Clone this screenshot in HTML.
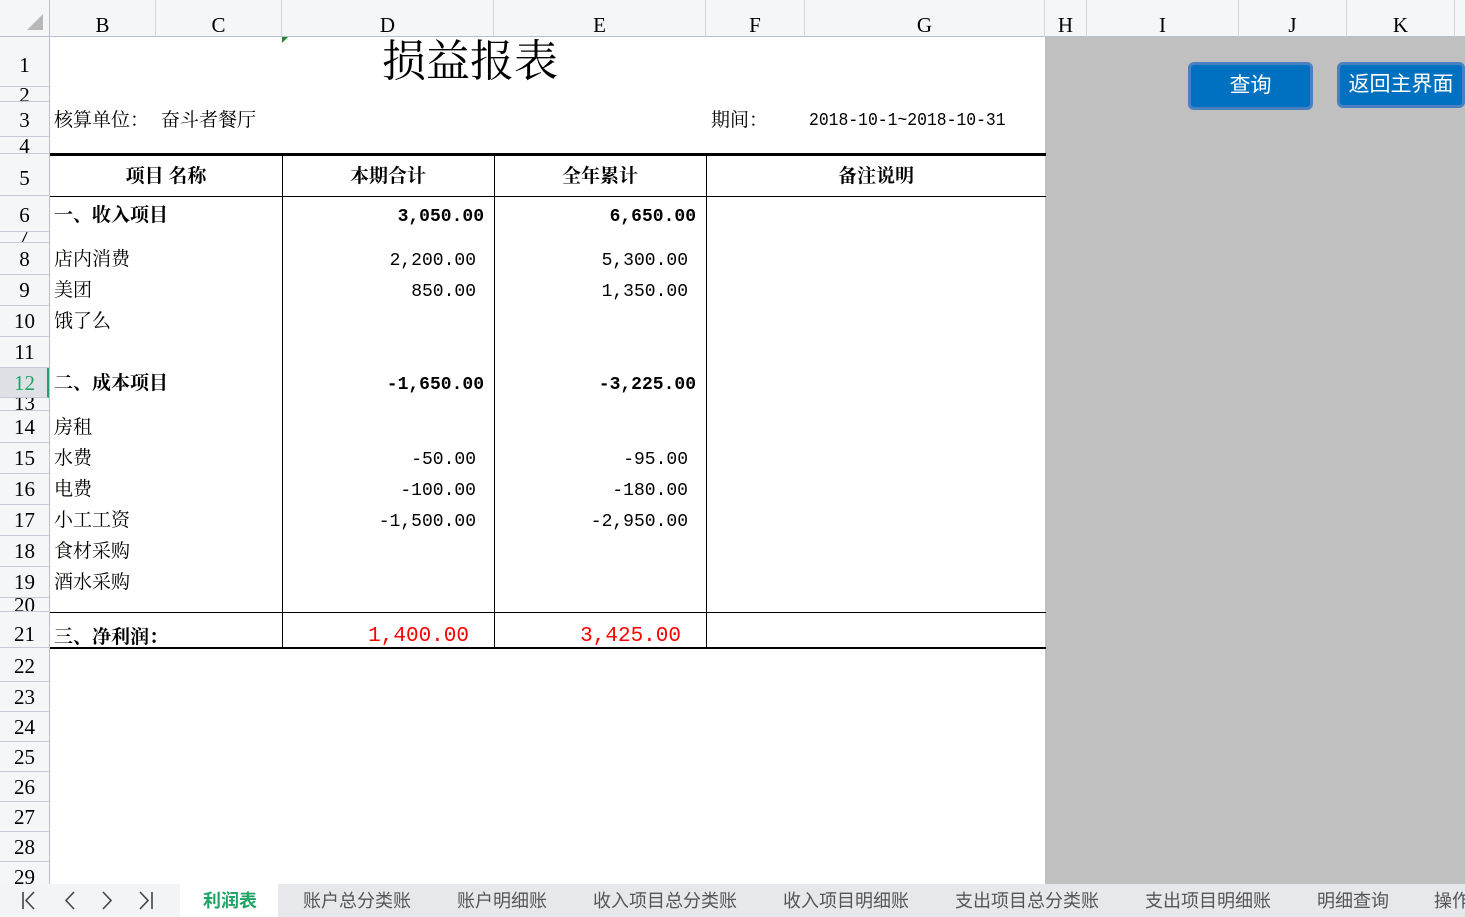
<!DOCTYPE html>
<html><head><meta charset="utf-8"><style>
*{margin:0;padding:0;box-sizing:border-box}
html,body{width:1465px;height:917px;overflow:hidden}
body{position:relative;background:#fff;font-family:"Liberation Serif","Noto Serif CJK SC",serif;color:#000}
.a{position:absolute}
.hdr{background:#f5f6f8}
.rh{position:absolute;left:0;width:49px;overflow:hidden;border-bottom:1px solid #c5cad6;background:#f5f6f8}
.rh span{position:absolute;left:0;width:49px;text-align:center;font-size:21px;line-height:22px}
.ch{position:absolute;top:0;height:37px;border-right:1px solid #d0d4dc;text-align:center;font-size:21px;line-height:50px;}
.t{position:absolute;font-size:19px;line-height:22px;white-space:nowrap;font-family:"Liberation Serif","Noto Serif CJK SC",serif}
.b{font-weight:bold}
.n{text-align:right;font-family:"Liberation Mono","Noto Serif CJK SC",monospace;font-size:18px}
.tab{position:absolute;top:884px;height:33px;font-size:18px;line-height:34px;color:#555;white-space:nowrap;font-family:"Liberation Sans","Noto Sans CJK SC",sans-serif}
</style></head><body>
<div class="a hdr" style="left:0;top:0;width:1465px;height:37px;border-bottom:1px solid #b9bfcc"></div>
<div class="a" style="left:27px;top:14px;width:0;height:0;border-left:16px solid transparent;border-bottom:16px solid #b8b8b8"></div>
<div class="a" style="left:49px;top:0;width:1px;height:884px;background:#b9bfcc"></div>
<div class="ch" style="left:50px;width:106px">B</div>
<div class="ch" style="left:156px;width:126px">C</div>
<div class="ch" style="left:282px;width:212px">D</div>
<div class="ch" style="left:494px;width:212px">E</div>
<div class="ch" style="left:706px;width:99px">F</div>
<div class="ch" style="left:805px;width:240px">G</div>
<div class="ch" style="left:1045px;width:42px">H</div>
<div class="ch" style="left:1087px;width:152px">I</div>
<div class="ch" style="left:1239px;width:108px">J</div>
<div class="ch" style="left:1347px;width:108px">K</div>
<div class="a" style="left:282px;top:37px;width:0;height:0;border-top:6px solid #1a8a2a;border-right:6px solid transparent"></div>

<div class="rh" style="top:37px;height:50px"><span style="top:17px">1</span></div>
<div class="rh" style="top:87px;height:15px"><span style="top:-3px">2</span></div>
<div class="rh" style="top:102px;height:35px"><span style="top:7px">3</span></div>
<div class="rh" style="top:137px;height:17px"><span style="top:-2px">4</span></div>
<div class="rh" style="top:154px;height:42px"><span style="top:13px">5</span></div>
<div class="rh" style="top:196px;height:36px"><span style="top:8px">6</span></div>
<div class="rh" style="top:232px;height:11px"><span style="top:-8px">7</span></div>
<div class="rh" style="top:243px;height:32px"><span style="top:5px">8</span></div>
<div class="rh" style="top:275px;height:31px"><span style="top:4px">9</span></div>
<div class="rh" style="top:306px;height:31px"><span style="top:4px">10</span></div>
<div class="rh" style="top:337px;height:31px"><span style="top:4px">11</span></div>
<div class="rh" style="top:368px;height:30px;background:#dfe1e6;border-right:2px solid #21a366"><span style="top:4px;color:#21a366">12</span></div>
<div class="rh" style="top:398px;height:13px"><span style="top:-6px">13</span></div>
<div class="rh" style="top:411px;height:32px"><span style="top:5px">14</span></div>
<div class="rh" style="top:443px;height:31px"><span style="top:4px">15</span></div>
<div class="rh" style="top:474px;height:31px"><span style="top:4px">16</span></div>
<div class="rh" style="top:505px;height:31px"><span style="top:4px">17</span></div>
<div class="rh" style="top:536px;height:31px"><span style="top:4px">18</span></div>
<div class="rh" style="top:567px;height:31px"><span style="top:4px">19</span></div>
<div class="rh" style="top:598px;height:14px"><span style="top:-4px">20</span></div>
<div class="rh" style="top:612px;height:36px"><span style="top:11px">21</span></div>
<div class="rh" style="top:648px;height:34px"><span style="top:7px">22</span></div>
<div class="rh" style="top:682px;height:30px"><span style="top:4px">23</span></div>
<div class="rh" style="top:712px;height:30px"><span style="top:4px">24</span></div>
<div class="rh" style="top:742px;height:30px"><span style="top:4px">25</span></div>
<div class="rh" style="top:772px;height:30px"><span style="top:4px">26</span></div>
<div class="rh" style="top:802px;height:30px"><span style="top:4px">27</span></div>
<div class="rh" style="top:832px;height:30px"><span style="top:4px">28</span></div>
<div class="rh" style="top:862px;height:22px;border-bottom:none"><span style="top:4px">29</span></div>

<div class="a" style="left:1045px;top:37px;width:420px;height:847px;background:#c0c0c0"></div>
<div class="a" style="left:1188px;top:62px;width:125px;height:48px;background:#0070c0;border:3px solid #4a7fc0;border-radius:6px;color:#fff;font-size:21px;text-align:center;line-height:42px;font-family:'Liberation Sans','Noto Sans CJK SC',sans-serif">查询</div>
<div class="a" style="left:1337px;top:62px;width:128px;height:46px;background:#0070c0;border:3px solid #4a7fc0;border-radius:6px;color:#fff;font-size:21px;text-align:center;line-height:40px;font-family:'Liberation Sans','Noto Sans CJK SC',sans-serif;white-space:nowrap">返回主界面</div>

<div class="t" style="left:382px;top:36px;font-size:44px;line-height:52px">损益报表</div>
<div class="t" style="left:54px;top:110px">核算单位：</div>
<div class="t" style="left:161px;top:110px">奋斗者餐厅</div>
<div class="t" style="left:711px;top:110px">期间：</div>
<div class="t" style="left:809px;top:110px;font-family:'Liberation Mono',monospace;font-size:18px;transform:scaleX(0.91);transform-origin:left">2018-10-1~2018-10-31</div>

<div class="a" style="left:50px;top:153px;width:996px;height:3px;background:#000"></div>
<div class="a" style="left:50px;top:196px;width:996px;height:1px;background:#000"></div>
<div class="a" style="left:50px;top:612px;width:996px;height:1px;background:#000"></div>
<div class="a" style="left:50px;top:647px;width:996px;height:2px;background:#000"></div>
<div class="a" style="left:282px;top:154px;width:1px;height:494px;background:#000"></div>
<div class="a" style="left:494px;top:154px;width:1px;height:494px;background:#000"></div>
<div class="a" style="left:706px;top:154px;width:1px;height:494px;background:#000"></div>

<div class="t b" style="left:50px;width:232px;text-align:center;top:166px">项目 名称</div>
<div class="t b" style="left:282px;width:212px;text-align:center;top:166px">本期合计</div>
<div class="t b" style="left:494px;width:212px;text-align:center;top:166px">全年累计</div>
<div class="t b" style="left:706px;width:340px;text-align:center;top:166px">备注说明</div>

<div class="t b" style="left:54px;top:205px">一、收入项目</div>
<div class="t b n" style="left:282px;width:202px;top:206px">3,050.00</div>
<div class="t b n" style="left:494px;width:202px;top:206px">6,650.00</div>
<div class="t" style="left:54px;top:249px">店内消费</div>
<div class="t n" style="left:282px;width:194px;top:250px">2,200.00</div>
<div class="t n" style="left:494px;width:194px;top:250px">5,300.00</div>
<div class="t" style="left:54px;top:280px">美团</div>
<div class="t n" style="left:282px;width:194px;top:281px">850.00</div>
<div class="t n" style="left:494px;width:194px;top:281px">1,350.00</div>
<div class="t" style="left:54px;top:311px">饿了么</div>
<div class="t b" style="left:54px;top:373px">二、成本项目</div>
<div class="t b n" style="left:282px;width:202px;top:374px">-1,650.00</div>
<div class="t b n" style="left:494px;width:202px;top:374px">-3,225.00</div>
<div class="t" style="left:54px;top:417px">房租</div>
<div class="t" style="left:54px;top:448px">水费</div>
<div class="t n" style="left:282px;width:194px;top:449px">-50.00</div>
<div class="t n" style="left:494px;width:194px;top:449px">-95.00</div>
<div class="t" style="left:54px;top:479px">电费</div>
<div class="t n" style="left:282px;width:194px;top:480px">-100.00</div>
<div class="t n" style="left:494px;width:194px;top:480px">-180.00</div>
<div class="t" style="left:54px;top:510px">小工工资</div>
<div class="t n" style="left:282px;width:194px;top:511px">-1,500.00</div>
<div class="t n" style="left:494px;width:194px;top:511px">-2,950.00</div>
<div class="t" style="left:54px;top:541px">食材采购</div>
<div class="t" style="left:54px;top:572px">酒水采购</div>
<div class="t b" style="left:54px;top:627px">三、净利润：</div>
<div class="t n" style="left:282px;width:187px;top:626px;color:#f00;font-size:21px">1,400.00</div>
<div class="t n" style="left:494px;width:187px;top:626px;color:#f00;font-size:21px">3,425.00</div>

<div class="a" style="left:0;top:884px;width:1465px;height:33px;background:#e7e8ec"></div>
<div class="a" style="left:0;top:884px;width:180px;height:33px;background:#f3f4f6"></div>
<svg class="a" style="left:0;top:884px" width="180" height="33" fill="none" stroke="#444" stroke-width="1.6">
<path d="M23 8v17M34 8l-8 8.5 8 8.5"/>
<path d="M74 8l-8 8.5 8 8.5"/>
<path d="M103 8l8 8.5-8 8.5"/>
<path d="M140 8l8 8.5-8 8.5M152 8v17"/>
</svg>
<div class="a" style="left:180px;top:884px;width:98px;height:33px;background:#fff"></div>
<div class="tab" style="left:203px;color:#21a366;font-weight:bold">利润表</div>
<div class="tab" style="left:303px">账户总分类账</div>
<div class="tab" style="left:457px">账户明细账</div>
<div class="tab" style="left:593px">收入项目总分类账</div>
<div class="tab" style="left:783px">收入项目明细账</div>
<div class="tab" style="left:955px">支出项目总分类账</div>
<div class="tab" style="left:1145px">支出项目明细账</div>
<div class="tab" style="left:1317px">明细查询</div>
<div class="tab" style="left:1434px">操作</div>
</body></html>
